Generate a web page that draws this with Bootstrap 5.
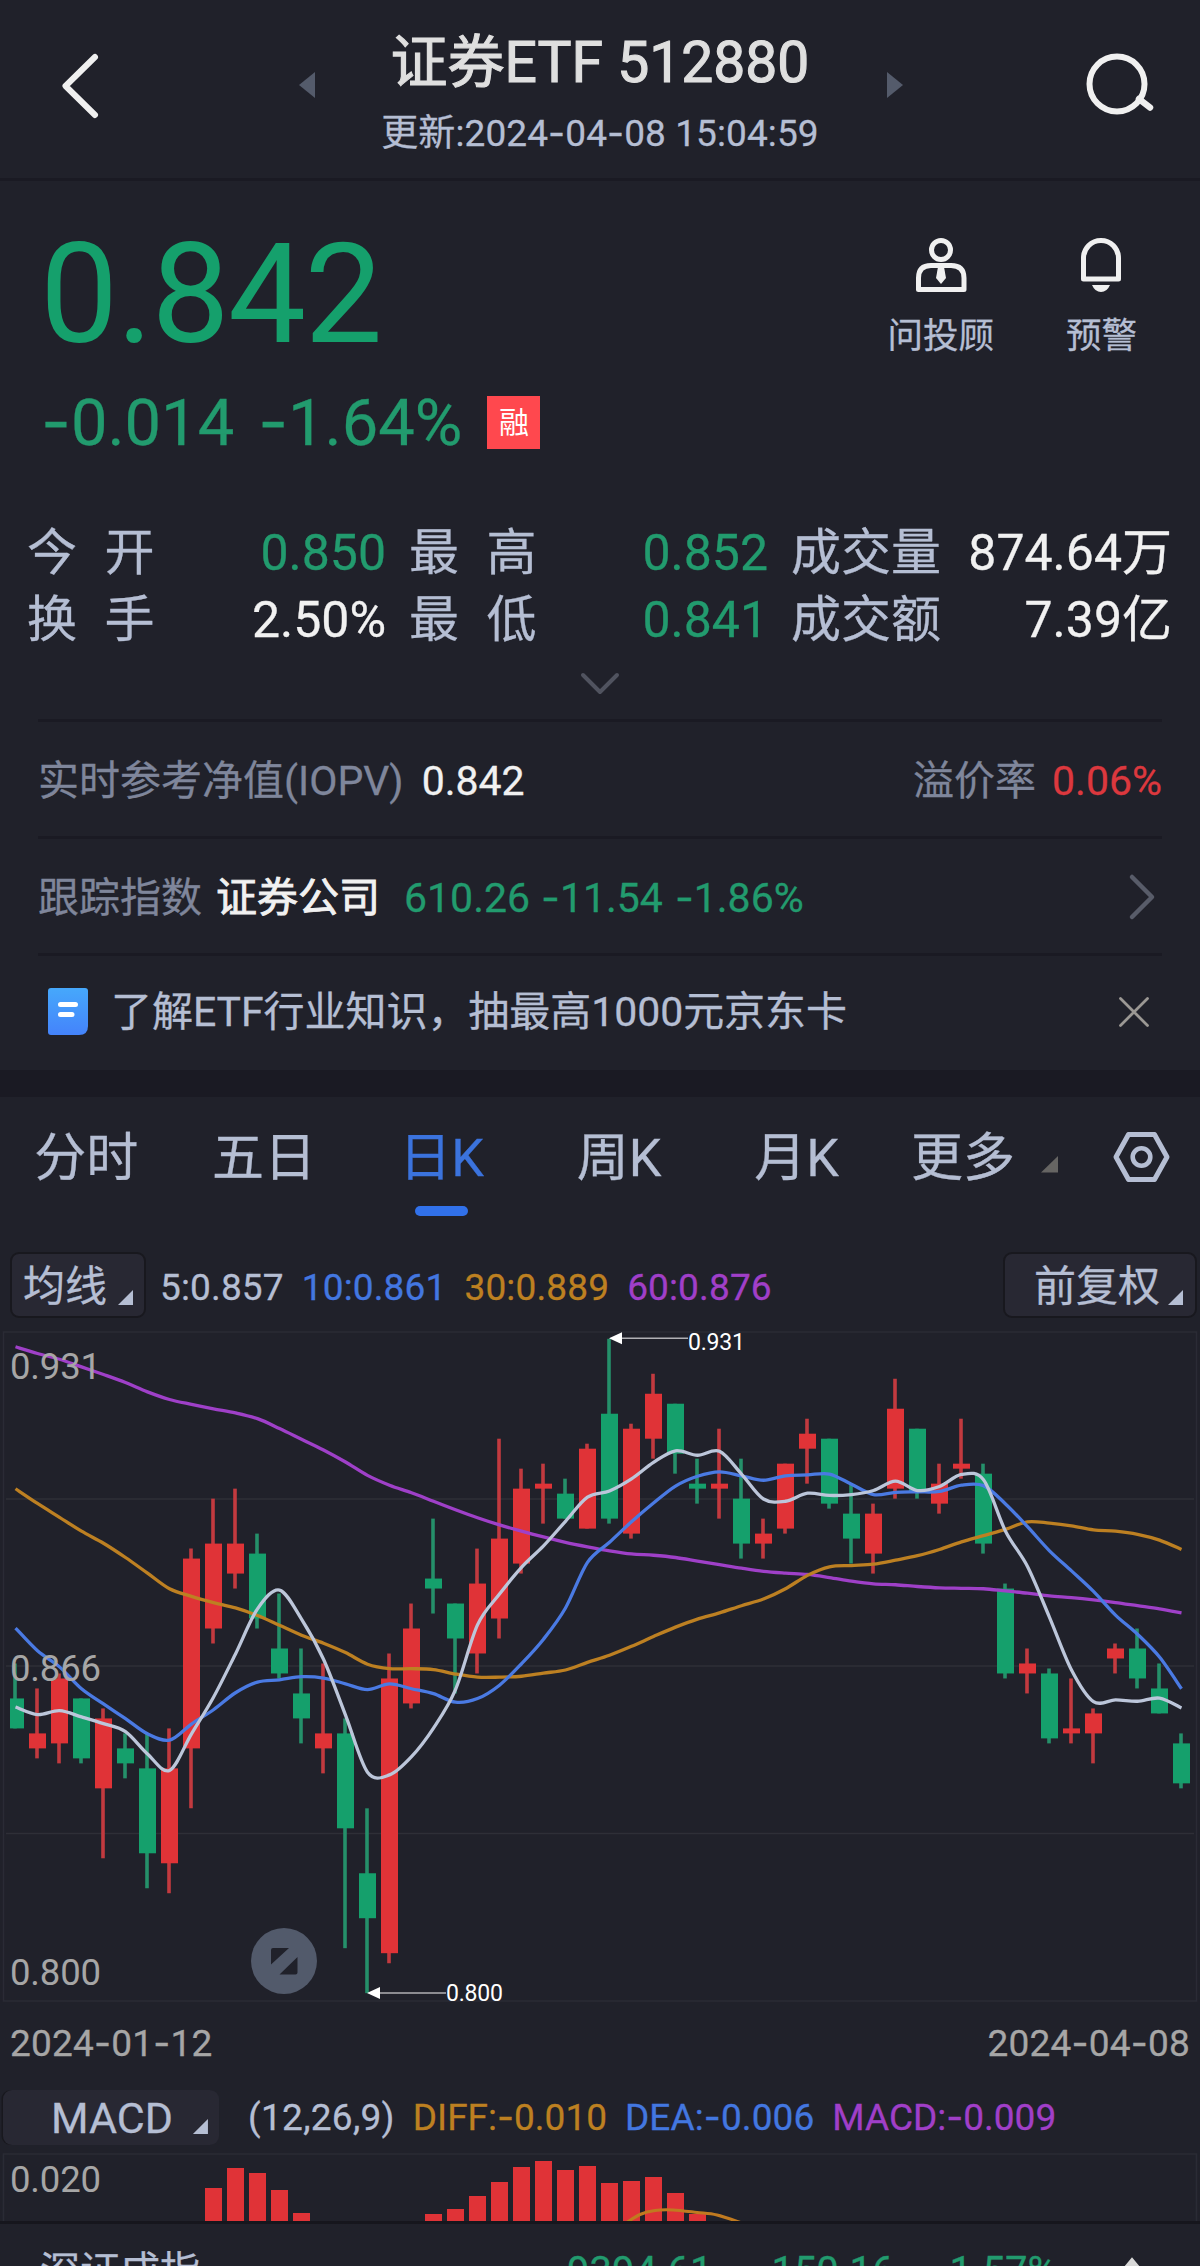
<!DOCTYPE html>
<html lang="zh-CN">
<head>
<meta charset="utf-8">
<meta name="viewport" content="width=device-width, initial-scale=1">
<title>证券ETF 512880</title>
<link href="https://cdn.jsdelivr.net/npm/bootstrap@5.3.0/dist/css/bootstrap.min.css" rel="stylesheet">
<style>
  :root { --bg:#20212a; --line:#1a1a23; --txt:#b5bed3; --muted:#7f869b; --up:#e03337; --down:#15a06c; --downtxt:#229b6e; --pale:#f1f1f1; --axis:#a6a6a6; }
  body { background:var(--bg); color:var(--txt); font-family:Roboto,"Noto Sans CJK SC",sans-serif; margin:0; }
  .screen { width:1200px; height:2266px; overflow:hidden; background:var(--bg); -webkit-text-stroke:.3px currentColor; }
  svg { display:block; flex:none; -webkit-text-stroke:0; }
  .dash { font-family:Inter,sans-serif; line-height:0; }
  .t-down { color:var(--downtxt); } .t-up { color:#dc383e; } .t-pale { color:var(--pale); } .t-muted { color:var(--muted); }
  .t-blue { color:#4377e0; } .t-gold { color:#bd8021; } .t-violet { color:#a03fc8; } .t-axis { color:var(--axis); }
  .topbar { height:181px; border-bottom:3px solid var(--line); }
  .topbar-title { width:572px; padding:28px 2px 0 0; }
  .topbar-title h1 { font-size:57px; line-height:70px; font-weight:400; color:#dfdfdf; margin:0 0 16px; -webkit-text-stroke:1.1px #dfdfdf; }
  .topbar-title p { font-size:37px; line-height:40px; margin:0; letter-spacing:.1px; }
  .price-now { font-size:139px; line-height:150px; color:var(--down); padding:39px 0 0 40px; letter-spacing:-1.6px; -webkit-text-stroke:0; }
  .price-chg { font-size:65px; line-height:70px; padding:18px 0 0 41px; height:88px; }
  .price-chg .pct { margin-left:24px; }
  .tag-rong { width:53px; height:53px; background:#ff484e; color:#fff; font-size:30px; line-height:53px; margin-left:25px; margin-bottom:2px; -webkit-text-stroke:0; }
  .quick { font-size:35.5px; line-height:40px; }
  .quick svg { margin-bottom:21px; }
  .quick-row { padding-top:56px; }
  .stats { padding:62px 28px 0 27px; font-size:50px; line-height:67px; }
  .stats .c1 { width:359px; margin-right:23px; } .stats .c2 { width:359px; margin-right:23px; } .stats .c3 { width:381px; }
  .spread { word-spacing:15px; }
  .inforow { height:117px; margin:0 38px; border-top:3px solid var(--line); font-size:41px; line-height:60px; padding-top:4px; }
  .promo { padding-top:0; padding-bottom:2px; }
  .promo svg { margin-top:-1px; }
  .emph { -webkit-text-stroke:.9px currentColor; }
  .band { height:27px; background:var(--line); }
  .ktabs { height:155px; font-size:52px; line-height:60px; padding-left:0; }
  .ktabs .ktab { width:177.6px; height:125px; padding:32px 5px 0 0; text-align:center; }
  .ktab.on { color:#3b73dd; }
  .ktab.on::after { content:""; display:block; width:53px; height:10px; border-radius:5px; background:#3171ea; margin:17px auto 0; }
  .chip { background:#282833; border:2px solid #18181e; border-radius:9px; height:66px; font-size:42px; line-height:65px; }
  .tri { width:15px; height:15px; background:var(--txt); clip-path:polygon(100% 0,100% 100%,0 100%); margin-top:19px; }
  .ma { height:66px; font-size:37px; line-height:71px; }
  .ma > span { letter-spacing:.15px; }
  .dates { height:66px; font-size:37px; line-height:68px; padding:0 10px; letter-spacing:.2px; }
  .macdrow { margin-top:14px; height:60px; font-size:37px; line-height:55px; }
  .macdchip { width:216px; height:55px; background:#282833; border-radius:9px; font-size:43px; line-height:57px; padding-left:48px; box-shadow:-1.5px 0 0 #18181e; }
  .footbar { border-top:3px solid #16161d; height:45px; font-size:40px; line-height:60px; padding:18px 0 0 40px; overflow:hidden; }
  .footbar svg { margin-top:14px; }
</style>
<script src="https://cdn.jsdelivr.net/npm/bootstrap@5.3.0/dist/js/bootstrap.bundle.min.js"></script>
</head>
<body>
<div class="screen d-flex flex-column">

  <header class="topbar d-flex flex-shrink-0">
    <svg width="315" height="178" viewBox="0 0 315 178"><path d="M95 57 L65.500 86 L95 115" fill="none" stroke="#f0f0f0" stroke-width="6" stroke-linecap="round" stroke-linejoin="round"/><path d="M299 85 L315 72 V98 Z" fill="#545b6b"/></svg>
    <div class="topbar-title text-center">
      <h1>证券ETF 512880</h1>
      <p>更新:2024<b class="dash fw-normal">-</b>04<b class="dash fw-normal">-</b>08 15:04:59</p>
    </div>
    <svg width="313" height="178" viewBox="887 0 313 178"><path d="M903 85 L887 72 V98 Z" fill="#545b6b"/><circle cx="1117" cy="84" r="27.500" fill="none" stroke="#f0f0f0" stroke-width="6"/><path d="M1139 99 L1150 107.500" stroke="#f0f0f0" stroke-width="6.500" stroke-linecap="round"/></svg>
  </header>

  <section class="d-flex justify-content-between flex-shrink-0">
    <div>
      <div class="price-now">0.842</div>
      <div class="price-chg t-down d-flex align-items-center"><span><b class="dash fw-normal">-</b>0.014</span><span class="pct"><b class="dash fw-normal">-</b>1.64%</span><span class="tag-rong text-center">融</span></div>
    </div>
    <div class="quick-row d-flex">
      <div class="quick d-flex flex-column align-items-center" style="margin-right:72px">
        <svg width="54" height="58" viewBox="914 237 54 58"><g fill="none" stroke="#f0f0f0" stroke-width="5"><circle cx="941" cy="250" r="9.5"/><path d="M918.5 289.500 V278 Q918.500 265.500 931 265.500 H951 Q964 265.500 964 278 V289.500 Z" stroke-linejoin="round"/></g><path d="M938 267 H944 L946 278 L941 284 L936 278 Z" fill="#f0f0f0"/></svg>
        <span>问投顾</span>
      </div>
      <div class="quick d-flex flex-column align-items-center" style="margin-right:63px">
        <svg width="44" height="58" viewBox="1080 237 44 58"><path d="M1084.500 279 V258 A17.500 17.500 0 0 1 1119.500 258 V279 Z" fill="none" stroke="#f0f0f0" stroke-width="5" stroke-linejoin="round"/><path d="M1093 285 H1111 Q1108 292 1102 292 Q1096 292 1093 285 Z" fill="#f0f0f0"/></svg>
        <span>预警</span>
      </div>
    </div>
  </section>

  <section class="stats d-flex flex-shrink-0">
    <div class="c1">
      <div class="d-flex justify-content-between"><span class="spread">今 开</span><span class="t-down">0.850</span></div>
      <div class="d-flex justify-content-between"><span class="spread">换 手</span><span class="t-pale">2.50%</span></div>
    </div>
    <div class="c2">
      <div class="d-flex justify-content-between"><span class="spread">最 高</span><span class="t-down">0.852</span></div>
      <div class="d-flex justify-content-between"><span class="spread">最 低</span><span class="t-down">0.841</span></div>
    </div>
    <div class="c3">
      <div class="d-flex justify-content-between"><span>成交量</span><span class="t-pale">874.64万</span></div>
      <div class="d-flex justify-content-between"><span>成交额</span><span class="t-pale">7.39亿</span></div>
    </div>
  </section>
  <svg width="1200" height="65" viewBox="0 654 1200 65"><path d="M583 675 L600 692 L617 675" fill="none" stroke="#50535f" stroke-width="4" stroke-linecap="round" stroke-linejoin="round"/></svg>

  <div class="inforow d-flex align-items-center justify-content-between flex-shrink-0">
    <div><span class="t-muted">实时参考净值(IOPV)</span><span class="t-pale" style="margin-left:18px">0.842</span></div>
    <div><span class="t-muted">溢价率</span><span class="t-up" style="margin-left:16px">0.06%</span></div>
  </div>
  <div class="inforow d-flex align-items-center flex-shrink-0">
    <span class="t-muted">跟踪指数</span>
    <span class="t-pale emph" style="margin-left:14px">证券公司</span>
    <span class="t-down" style="margin-left:24px">610.26</span>
    <span class="t-down" style="margin-left:11px"><b class="dash fw-normal">-</b>11.54</span>
    <span class="t-down" style="margin-left:12px"><b class="dash fw-normal">-</b>1.86%</span>
    <svg class="ms-auto" style="margin-right:5px" width="30" height="50" viewBox="1127 872 30 50"><path d="M1132 876 L1152 896 L1132 916" fill="none" stroke="#585c69" stroke-width="4.500" stroke-linecap="round" stroke-linejoin="round"/></svg>
  </div>
  <div class="inforow promo d-flex align-items-center flex-shrink-0">
    <svg style="margin-left:10px" width="40" height="47" viewBox="0 0 40 47"><defs><linearGradient id="doc" x1="0" y1="0" x2="0" y2="1"><stop offset="0" stop-color="#46a8fb"/><stop offset="1" stop-color="#4483fb"/></linearGradient></defs><path d="M3 0 H37 Q40 0 40 3 V38 Q40 47 31 47 H3 Q0 47 0 44 V3 Q0 0 3 0 Z" fill="url(#doc)"/><path d="M12.500 16.500 H27.500 M12.500 26.500 H24" stroke="#fff" stroke-width="5" stroke-linecap="round"/></svg>
    <span style="margin-left:23px;letter-spacing:-.05px">了解ETF行业知识，抽最高1000元京东卡</span>
    <svg class="ms-auto" style="margin-right:11px" width="34" height="34" viewBox="0 0 34 34"><path d="M3.500 3.500 L30.500 30.500 M30.500 3.500 L3.500 30.500" stroke="#9b9894" stroke-width="2.800" stroke-linecap="round"/></svg>
  </div>
  <div class="band flex-shrink-0"></div>

  <nav class="ktabs d-flex flex-shrink-0">
    <div class="ktab">分时</div><div class="ktab">五日</div><div class="ktab on">日K</div><div class="ktab">周K</div><div class="ktab">月K</div>
    <div class="ktab" style="width:150px;padding-right:0">更多</div>
    <svg width="160" height="125" viewBox="1038 1097 160 125"><path d="M1041 1172.500 H1058 V1156 Z" fill="#666563"/><path d="M1128.500 1134.500 H1154.500 L1167 1157 L1154.500 1179.500 H1128.500 L1116 1157 Z" fill="none" stroke="#b5bed3" stroke-width="5" stroke-linejoin="round"/><circle cx="1141.500" cy="1157" r="8.800" fill="none" stroke="#b5bed3" stroke-width="4.600"/></svg>
  </nav>

  <div class="ma d-flex flex-shrink-0">
    <div class="chip d-flex" style="width:136px;margin-left:10px;padding-left:11px"><span>均线</span><i class="tri" style="margin-left:11px;margin-top:36px"></i></div>
    <span style="margin-left:14px">5:0.857</span>
    <span class="t-blue" style="margin-left:18px">10:0.861</span>
    <span class="t-gold" style="margin-left:18px">30:0.889</span>
    <span class="t-violet" style="margin-left:18px">60:0.876</span>
    <div class="chip d-flex ms-auto" style="width:194px;margin-right:3px;padding-left:29px"><span>前复权</span><i class="tri" style="margin-left:8px;margin-top:36px"></i></div>
  </div>

  <svg id="kchart" width="1200" height="692" viewBox="0 1318 1200 692" font-family="Roboto, sans-serif"></svg>

  <div class="dates t-axis d-flex justify-content-between flex-shrink-0"><span>2024<b class="dash fw-normal">-</b>01<b class="dash fw-normal">-</b>12</span><span>2024<b class="dash fw-normal">-</b>04<b class="dash fw-normal">-</b>08</span></div>

  <div class="macdrow d-flex flex-shrink-0">
    <div class="macdchip d-flex" style="margin-left:3px"><span>MACD</span><i class="tri" style="margin-left:20px;margin-top:29px"></i></div>
    <span style="margin-left:29px;letter-spacing:.3px">(12,26,9)</span>
    <span class="t-gold" style="margin-left:18px">DIFF:<b class="dash fw-normal">-</b>0.010</span>
    <span class="t-blue" style="margin-left:18px;letter-spacing:.1px">DEA:<b class="dash fw-normal">-</b>0.006</span>
    <span class="t-violet" style="margin-left:18px">MACD:<b class="dash fw-normal">-</b>0.009</span>
  </div>
  <svg id="macd" width="1200" height="71" viewBox="0 2150 1200 71" font-family="Roboto, sans-serif"></svg>

  <footer class="footbar d-flex flex-shrink-0">
    <span style="width:527px">深证成指</span>
    <span class="t-down" style="width:186px">9394.61</span>
    <span class="t-down" style="width:178px"><b class="dash fw-normal">-</b>150.16</span>
    <span class="t-down" style="width:187px"><b class="dash fw-normal">-</b>1.57%</span>
    <svg width="32" height="32" viewBox="0 0 32 32"><path d="M4 18 L14 6 L24 18" fill="none" stroke="#d8d8d8" stroke-width="6" stroke-linejoin="miter"/></svg>
  </footer>
</div>

<script>
// Each candle: direction, then high / body top / body bottom / low in ticks of 0.001 below 0.931
const candles = `G65,72,78,78 R70,79,82,84 R67,68,81,85 G72,72,84,85 R74,76,90,104 G79,82,85,88 G79,86,103,110 R78,86,105,111
R42,44,82,94 R32,41,58,61 R30,41,47,50 G39,43,56,58 G51,62,67,68 G62,71,76,81 R65,79,82,87 G76,79,98,122 G94,107,116,131 R63,68,123,125
R53,58,73,74 G36,48,50,55 G53,53,60,71 R42,49,63,67 R20,40,56,60 R26,30,45,47 R25,29,30,37 G28,31,36,36 R21,22,38,38 G0,15,36,37
R17,18,39,40 R7,11,20,24 G13,13,23,27 G24,29,30,33 R18,29,30,36 G24,32,41,44 R36,39,41,44 R25,25,38,39 R16,19,22,29 G20,20,33,34
G29,35,40,45 R33,35,43,47 R8,14,30,32 G18,18,30.5,32 R25,29,33,35 R16,25,26,28 G25,27,41,43 G49,50,67,68 R62,65,67,71 G66,67,80,81
R68,78,79,81 R74,75,79,85 R61,62,64,67 G58,62,68,70 G65,70,75,75 G79,81,89,90`.split(/\s+/);
const averages = {
 '#9f40c8':[60,75,88,105,122,140,161,178,189,199,208,221,243,267,291,318,348,370,387,406,425,443,459,473,486,498,508,517,524,527,532,540,548,556,563,567,570,577,585,591,593,597,600,601,602,607,612,618,622,627,633,640,647,656],
 '#bd8022':[378,411,442,473,500,532,567,602,619,633,645,662,684,706,724,745,771,781,781,783,793,800,800,798,791,784,767,751,731,709,688,670,656,640,625,602,572,553,550,547,538,528,514,497,483,469,452,455,461,470,473,480,493,514],
 '#4a7ae3':[690,741,777,826,860,893,927,941,905,873,835,811,806,799,802,815,828,815,826,837,856,848,818,770,715,645,543,498,452,410,372,350,340,349,359,349,347,345,368,391,386,385,384,370,371,412,463,517,562,608,661,704,755,826],
 '#bcc6da':[867,884,875,889,904,922,972,1009,927,845,748,647,605,670,760,885,1013,1019,978,914,828,683,614,554,506,451,397,383,356,319,293,303,294,345,401,406,388,393,391,382,361,382,373,346,358,473,552,666,784,855,851,854,847,869]
};
const cx = i => 15 + 22 * i, py = t => 1338.8 + t * 4.995;
function smooth(p) {
  let d = `M${p[0][0]} ${p[0][1]}`;
  for (let i = 0; i < p.length - 1; i++) {
    const a = p[i - 1] || p[i], b = p[i], c = p[i + 1], e = p[i + 2] || c, k = .16;
    d += ` C${b[0] + (c[0] - a[0]) * k} ${b[1] + (c[1] - a[1]) * k} ${c[0] - (e[0] - b[0]) * k} ${c[1] - (e[1] - b[1]) * k} ${c[0]} ${c[1]}`;
  }
  return d;
}
let s = '<g stroke="#2a2b35" stroke-width="1.500" fill="none"><rect x="3.500" y="1332" width="1193" height="669"/>';
for (const y of [1499, 1666, 1833.500]) s += `<path d="M6 ${y}H1194" stroke="#2e2f37"/>`;
s += '</g>';
candles.forEach((c, i) => {
  const [h, a, b, l] = c.slice(1).split(',').map(Number), g = c[0] === 'G', x = cx(i);
  s += `<path d="M${x} ${py(h)}V${py(l)}" stroke="${g ? '#25906a' : '#c23a3f'}" stroke-width="3.600"/>`;
  const left = i ? x - 8 : 10, w = i ? 17 : 14;
  s += `<rect x="${left}" y="${py(a)}" width="${w}" height="${(b - a) * 4.995}" fill="${g ? '#15a06c' : '#e03337'}"/>`;
});
for (const [col, v] of Object.entries(averages))
  s += `<path d="${smooth(v.map((y, i) => [cx(i) + .5, 1320 + y / 2.24]))}" fill="none" stroke="${col}" stroke-width="3.300"/>`;
s += '<g font-size="36.500" fill="#a6a6a6"><text x="10" y="1379" textLength="91">0.931</text><text x="10" y="1681" textLength="91">0.866</text><text x="10" y="1985" textLength="91">0.800</text></g>';
s += '<g stroke="#b0b0b4" stroke-width="1.600"><path d="M620 1338.300H688M379 1993H446"/></g><path d="M609 1338.300l13-6v12zM367 1993l13-6v12z" fill="#fff"/>';
s += '<g font-size="23" fill="#fff"><text x="688" y="1350" textLength="57">0.931</text><text x="446" y="2001" textLength="57">0.800</text></g>';
s += '<circle cx="284" cy="1961" r="33" fill="#525a6b"/><path d="M273 1948H289L271 1964.500V1950Q271 1948 273 1948ZM295.500 1974.500H279.500L297.500 1957V1972.500Q297.500 1974.500 295.500 1974.500Z" fill="#20212a"/>';
document.getElementById('kchart').innerHTML = s;

const bars = {9:2188,10:2168,11:2173,12:2190,13:2213,19:2214,20:2209,21:2196,22:2182,23:2167,24:2161,25:2170,26:2166,27:2183,28:2181,29:2177,30:2193,31:2214};
let m = '<path d="M3.500 2221V2154H1196.500V2221" fill="none" stroke="#2a2b35" stroke-width="1.600"/>';
for (const [i, y] of Object.entries(bars)) m += `<rect x="${cx(+i) - 8}" y="${y}" width="17" height="${2222 - y}" fill="#e03337"/>`;
m += `<path d="${smooth([[626,2223],[640,2214.500],[655,2210.500],[673,2210],[697,2212.500],[717,2215],[742,2223]])}" fill="none" stroke="#c07a20" stroke-width="3"/>`;
m += '<text x="10" y="2192" font-size="36.500" fill="#a6a6a6" textLength="91">0.020</text>';
document.getElementById('macd').innerHTML = m;
</script>
</body>
</html>
